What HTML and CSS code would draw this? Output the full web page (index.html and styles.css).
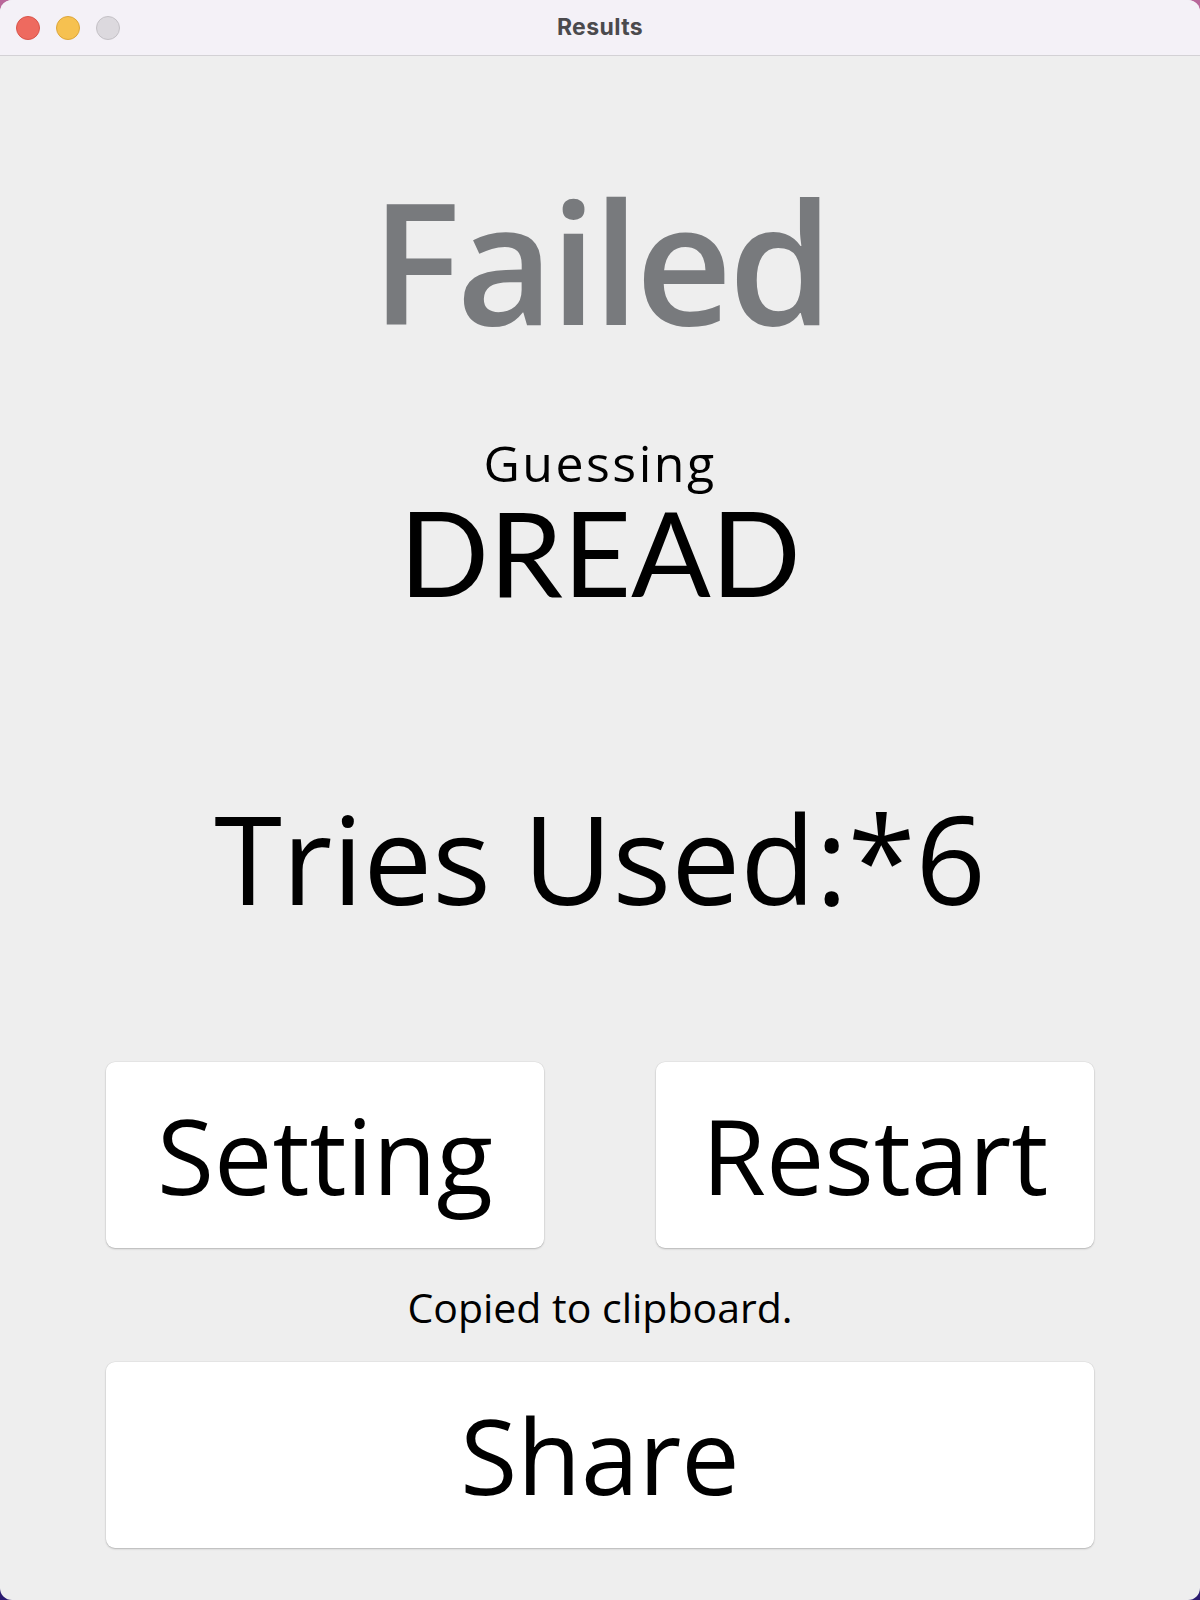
FILE: index.html
```html
<!DOCTYPE html>
<html>
<head>
<meta charset="utf-8">
<link rel="stylesheet" href="styles.css">
</head>
<body>
<div class="window">
  <div class="titlebar">
    <div class="lights">
      <span class="light red"></span>
      <span class="light yellow"></span>
      <span class="light grey"></span>
    </div>
    <div class="wintitle">Results</div>
  </div>
  <div class="content">
    <div class="failed">Failed</div>
    <div class="guessing">Guessing</div>
    <div class="word">DREAD</div>
    <div class="tries">Tries Used:*6</div>
    <div class="btnrow">
      <div class="btn">Setting</div>
      <div class="btn">Restart</div>
    </div>
    <div class="copied">Copied to clipboard.</div>
    <div class="btn wide">Share</div>
  </div>
</div>
</body>
</html>
```
FILE: styles.css
```css
html, body {
  margin: 0;
  padding: 0;
}
body {
  width: 1200px;
  height: 1600px;
  background: linear-gradient(180deg, #b9679a 0%, #6a3f8e 50%, #2a1a70 100%);
  overflow: hidden;
}
.window {
  width: 1200px;
  height: 1600px;
  border-radius: 12px;
  overflow: hidden;
  background: #eeeeee;
  display: flex;
  flex-direction: column;
}
.titlebar {
  height: 55px;
  border-bottom: 1px solid #d3d1d5;
  background: #f4f1f7;
  position: relative;
  display: flex;
  align-items: center;
  justify-content: center;
  flex-shrink: 0;
}
.lights {
  position: absolute;
  left: 16px;
  top: 16px;
  display: flex;
  gap: 16px;
}
.light {
  width: 24px;
  height: 24px;
  border-radius: 50%;
  box-sizing: border-box;
}
.red { background: #ee6a5f; border: 1px solid #d9544a; }
.yellow { background: #f6c150; border: 1px solid #dda63a; }
.grey { background: #dcd9de; border: 1px solid #c4c1c6; }
.wintitle {
  font-family: "Inter", "Liberation Sans", sans-serif;
  font-weight: 700;
  font-size: 23px;
  letter-spacing: 0.4px;
  color: #4b4a4d;
  margin-top: -2px;
}
.content {
  display: flex;
  flex-direction: column;
  align-items: center;
  font-family: "Open Sans", "Noto Sans", sans-serif;
  color: #000;
}
.failed {
  font-size: 168px;
  line-height: 1;
  font-weight: 600;
  letter-spacing: -4px;
  color: #787a7d;
  margin-top: 120px;
}
.guessing {
  font-size: 50px;
  line-height: 1;
  letter-spacing: 2.5px;
  margin-top: 94px;
}
.word {
  font-family: "Lato", "Open Sans", sans-serif;
  font-size: 118px;
  line-height: 1;
  margin-top: 5px;
}
.tries {
  font-size: 123px;
  line-height: 1;
  margin-top: 185px;
}
.btnrow {
  display: flex;
  gap: 112px;
  margin-top: 143px;
}
.btn {
  width: 438px;
  height: 186px;
  background: #ffffff;
  border-radius: 9px;
  box-shadow: 0 1px 2px rgba(0, 0, 0, 0.22), 0 0 0 0.5px rgba(0, 0, 0, 0.06);
  display: flex;
  align-items: center;
  justify-content: center;
  font-size: 104px;
  line-height: 1;
}
.btn.wide {
  width: 988px;
  margin-top: 34px;
}
.copied {
  font-size: 41px;
  line-height: 1;
  margin-top: 39px;
}
```
